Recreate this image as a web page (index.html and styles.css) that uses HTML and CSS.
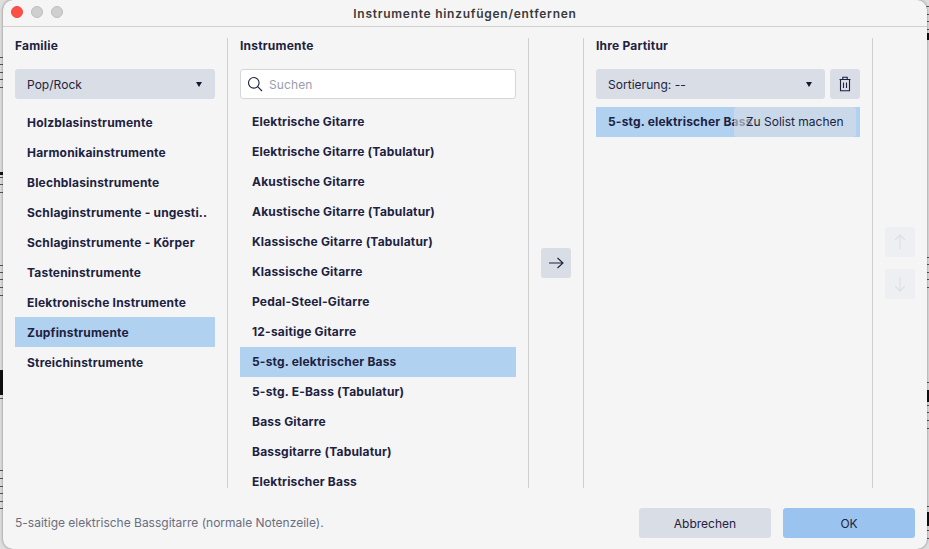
FILE: index.html
```html
<!DOCTYPE html>
<html lang="de">
<head>
<meta charset="utf-8">
<title>Instrumente hinzufügen/entfernen</title>
<link rel="stylesheet" href="styles.css">
</head>
<body>
<svg class="score" width="929" height="549" viewBox="0 0 929 549" aria-hidden="true">
  <g stroke="#555" stroke-width="1">
    <path d="M0 57.5H4M0 64.5H4M0 72.5H4M0 79.5H4M0 87.5H4"/>
    <path d="M0 177.5H4M0 184.5H4M0 192.5H4"/>
    <path d="M0 265.5H4M0 272.5H4M0 279.5H4M0 287.5H4M0 295.5H4"/>
    <path d="M0 398.5H4M0 470.5H4M0 478.5H4M0 486.5H4M0 493.5H4M0 501.5H4M0 508.5H4"/>
    <path d="M926 6.5H929M926 14.5H929M926 21.5H929M926 29.5H929"/>
    <path d="M926 257.5H929M926 264.5H929M926 272.5H929M926 279.5H929M926 287.5H929"/>
    <path d="M926 382.5H929M926 390.5H929M926 398.5H929M926 405.5H929M926 412.5H929M926 420.5H929M926 428.5H929"/>
    <path d="M926 506.5H929M926 514.5H929M926 522.5H929M926 530.5H929M926 538.5H929"/>
  </g>
  <path d="M926 33h3v7h-3zM926 390h3v12h-3zM926 512h3v14h-3zM0 370h3v25h-3zM0 172h3v3h-3z" fill="#111"/>
</svg>
<main class="window">
  <header class="titlebar">
    <div class="lights">
      <span class="light light-close"></span>
      <span class="light"></span>
      <span class="light"></span>
    </div>
    <h1 class="title">Instrumente hinzufügen/entfernen</h1>
  </header>

  <div class="content">
    <section class="col col-family">
      <h2 class="heading">Familie</h2>
      <div class="select"><span>Pop/Rock</span><span class="caret"></span></div>
      <ul class="list">
        <li>Holzblasinstrumente</li>
        <li>Harmonikainstrumente</li>
        <li>Blechblasinstrumente</li>
        <li>Schlaginstrumente - ungesti..</li>
        <li>Schlaginstrumente - Körper</li>
        <li>Tasteninstrumente</li>
        <li>Elektronische Instrumente</li>
        <li class="selected">Zupfinstrumente</li>
        <li>Streichinstrumente</li>
      </ul>
    </section>

    <section class="col col-instruments">
      <h2 class="heading">Instrumente</h2>
      <div class="search">
        <svg class="search-icon" width="16" height="16" viewBox="0 0 16 16" fill="none" stroke="#1c2240" stroke-width="1.1"><circle cx="6.8" cy="6.8" r="5.3"/><path d="M10.6 10.6L15 15"/></svg>
        <span class="placeholder">Suchen</span>
      </div>
      <ul class="list">
        <li>Elektrische Gitarre</li>
        <li>Elektrische Gitarre (Tabulatur)</li>
        <li>Akustische Gitarre</li>
        <li>Akustische Gitarre (Tabulatur)</li>
        <li>Klassische Gitarre (Tabulatur)</li>
        <li>Klassische Gitarre</li>
        <li>Pedal-Steel-Gitarre</li>
        <li>12-saitige Gitarre</li>
        <li class="selected">5-stg. elektrischer Bass</li>
        <li>5-stg. E-Bass (Tabulatur)</li>
        <li>Bass Gitarre</li>
        <li>Bassgitarre (Tabulatur)</li>
        <li>Elektrischer Bass</li>
      </ul>
    </section>

    <section class="col col-add">
      <button class="icon-btn" type="button" aria-label="Hinzufügen">
        <svg width="16" height="16" viewBox="0 0 16 16" fill="none" stroke="#1c2240" stroke-width="1.1"><path d="M1 8H15M9.5 3L15 8L9.5 13"/></svg>
      </button>
    </section>

    <section class="col col-score">
      <h2 class="heading">Ihre Partitur</h2>
      <div class="score-tools">
        <div class="select select-grow"><span>Sortierung: --</span><span class="caret"></span></div>
        <button class="icon-btn" type="button" aria-label="Löschen">
          <svg width="16" height="16" viewBox="0 0 16 16" fill="none" stroke="#1c2240" stroke-width="1.1"><path d="M2.5 3.5H13.5M5.8 3.5V1.2H10.2V3.5M3.5 3.5V14.8H12.5V3.5M6.5 6.5V12M9.5 6.5V12"/></svg>
        </button>
      </div>
      <div class="score-item">
        <span class="score-name">5-stg. elektrischer Bass</span>
        <span class="solo">Zu Solist machen</span>
      </div>
    </section>

    <section class="col col-move">
      <button class="icon-btn muted" type="button" aria-label="Nach oben">
        <svg width="16" height="16" viewBox="0 0 16 16" fill="none" stroke="#dcdfe6" stroke-width="1.1"><path d="M8 15V1M3 6L8 1L13 6"/></svg>
      </button>
      <button class="icon-btn muted" type="button" aria-label="Nach unten">
        <svg width="16" height="16" viewBox="0 0 16 16" fill="none" stroke="#dcdfe6" stroke-width="1.1"><path d="M8 1V15M3 10L8 15L13 10"/></svg>
      </button>
    </section>
  </div>

  <footer class="footer">
    <p class="description">5-saitige elektrische Bassgitarre (normale Notenzeile).</p>
    <button class="btn" type="button">Abbrechen</button>
    <button class="btn btn-primary" type="button">OK</button>
  </footer>
</main>
</body>
</html>
```
FILE: styles.css
```css
* { box-sizing: border-box; }
html, body { margin: 0; height: 100%; }
body {
  width: 929px;
  height: 549px;
  overflow: hidden;
  position: relative;
  background: #dedede;
  font-family: Inter, "Liberation Sans", sans-serif;
  font-size: 12px;
  color: #1c2240;
}
.score { position: absolute; left: 0; top: 0; }
.window {
  position: absolute;
  left: 3px;
  top: 0;
  width: 924px;
  height: 549px;
  background: #f5f5f5;
  border-radius: 10px;
  box-shadow: 0 0 3px rgba(0, 0, 0, .45);
  display: flex;
  flex-direction: column;
  overflow: hidden;
}
.titlebar {
  height: 27px;
  flex: none;
  position: relative;
  display: flex;
  align-items: center;
  justify-content: center;
  border-bottom: 1px solid #d0d0d0;
}
.title {
  margin: 0;
  font-size: 12px;
  font-weight: 600;
  color: #3a3a3a;
  letter-spacing: .73px;
}
.lights {
  position: absolute;
  left: 8px;
  top: 6px;
  display: flex;
  gap: 8px;
}
.light {
  width: 12px;
  height: 12px;
  border-radius: 50%;
  background: #cfcfcf;
  border: 1px solid #bdbdbd;
}
.light-close { background: #ff4f48; border-color: #ee4940; }

.content {
  flex: none;
  height: 461px;
  padding: 11px 0 0 12px;
  display: flex;
}
.col { height: 450px; overflow: hidden; flex: none; }
.col-family { width: 213px; padding-right: 12px; border-right: 1px solid #cfcfcf; }
.col-instruments { width: 301px; padding: 0 12px; border-right: 1px solid #cfcfcf; }
.col-add {
  width: 55px;
  padding-top: 210px;
  display: flex;
  justify-content: center;
  border-right: 1px solid #cfcfcf;
}
.col-score { width: 289px; padding: 0 12px; border-right: 1px solid #cfcfcf; }
.col-move {
  width: 42px;
  padding: 189px 0 0 12px;
  display: flex;
  flex-direction: column;
  gap: 12px;
}
.heading {
  margin: 0;
  height: 31px;
  padding-top: 1px;
  font-size: 12px;
  line-height: 14px;
  font-weight: 700;
  letter-spacing: .2px;
}
.select {
  height: 30px;
  padding: 0 13px 0 12px;
  display: flex;
  align-items: center;
  justify-content: space-between;
  background: #d9dde5;
  border-radius: 3px;
  letter-spacing: .03px;
}
.select-grow { flex: 1; }
.caret {
  width: 0;
  height: 0;
  border-left: 3px solid transparent;
  border-right: 3px solid transparent;
  border-top: 5px solid #15182e;
}
.list {
  list-style: none;
  margin: 8px 0 0;
  padding: 0;
}
.list li {
  height: 30px;
  line-height: 29px;
  padding-left: 12px;
  font-weight: 700;
  letter-spacing: .19px;
  white-space: nowrap;
}
.col-family .list li { line-height: 31px; }
.list .selected { background: #b1d1f0; }
.search {
  height: 30px;
  display: flex;
  align-items: center;
  gap: 6px;
  padding-left: 6px;
  background: #fff;
  border: 1px solid #d4d6dc;
  border-radius: 3px;
}
.search-icon { flex: none; }
.placeholder { color: #9a9dac; letter-spacing: .1px; }
.icon-btn {
  width: 30px;
  height: 30px;
  padding: 0;
  flex: none;
  display: flex;
  align-items: center;
  justify-content: center;
  background: #d9dde5;
  border: 0;
  border-radius: 3px;
}
.icon-btn.muted { background: #eeeff3; }
.score-tools { display: flex; gap: 5px; }
.score-item {
  margin-top: 8px;
  height: 30px;
  position: relative;
  overflow: hidden;
  background: #b1d1f0;
  padding-left: 12px;
  line-height: 29px;
  white-space: nowrap;
}
.score-name { font-weight: 700; letter-spacing: .19px; }
.solo {
  position: absolute;
  right: 4px;
  top: 0;
  width: 122px;
  height: 30px;
  padding-left: 12px;
  background: rgba(217, 221, 229, .62);
  border-radius: 3px;
}
.footer {
  flex: 1;
  display: flex;
  align-items: flex-start;
  padding: 20px 12px 0;
  gap: 12px;
}
.description {
  margin: 0 auto 0 0;
  height: 30px;
  line-height: 30px;
  color: #6b6d80;
}
.btn {
  width: 132px;
  height: 30px;
  border: 0;
  border-radius: 3px;
  background: #d9dde5;
  color: #1c2240;
  font: inherit;
}
.btn-primary { background: #9ac4ef; }
```
